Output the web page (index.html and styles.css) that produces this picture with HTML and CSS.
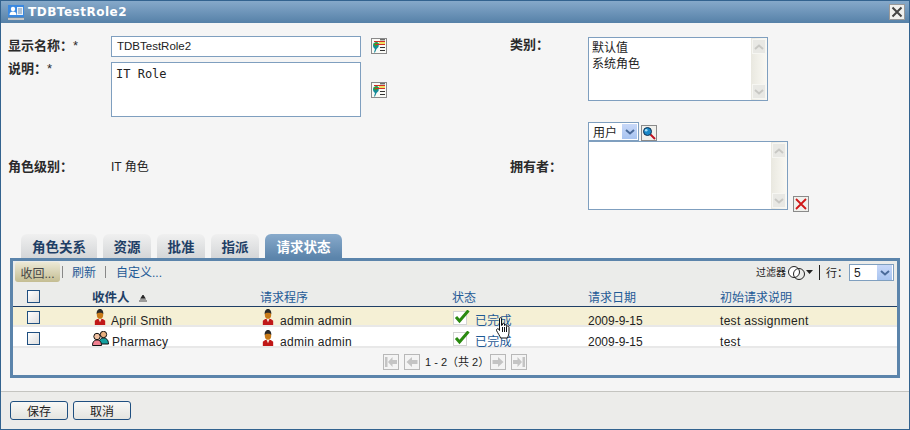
FILE: index.html
```html
<!DOCTYPE html>
<html lang="zh">
<head>
<meta charset="utf-8">
<title>TDBTestRole2</title>
<link rel="stylesheet" href="styles.css">
</head>
<body>
<svg class="defs" width="0" height="0">
  <symbol id="person" viewBox="0 0 12 17">
    <path d="M.5 17V12.500L3 10.500H9L11.500 12.500V17Z" fill="#c01818"/>
    <path d="M4.500 10.500H7.500L6 14Z" fill="#f4e8d8"/>
    <ellipse cx="6" cy="6" rx="3.400" ry="4.400" fill="#c87a18"/>
    <path d="M2.500 5.500C2.200 1.500 4 0 6 0S9.800 1.500 9.500 5.500C8.500 3.600 3.500 3.600 2.500 5.500Z" fill="#2a2a2a"/>
  </symbol>
  <symbol id="group" viewBox="0 0 17 15">
    <circle cx="11.500" cy="3.500" r="3.200" fill="#e8b080" stroke="#111"/>
    <path d="M7 13C7 8.500 9 7 11.500 7S16.500 8.500 16.500 13Z" fill="#14a0a0" stroke="#111"/>
    <circle cx="5" cy="5.500" r="3.200" fill="#f0c0a0" stroke="#111"/>
    <path d="M.5 14.500C.5 10.500 2.500 9 5 9S9.500 10.500 9.500 14.500Z" fill="#f08090" stroke="#111"/>
  </symbol>
  <symbol id="check" viewBox="0 0 17 15">
    <rect x=".5" y="1.500" width="13" height="13" fill="#fff" stroke="#d4d4d4"/>
    <path d="M3 7L6.500 11L15.500 .5" fill="none" stroke="#2a8a10" stroke-width="3"/>
  </symbol>
  <symbol id="lookup" viewBox="0 0 16 16">
    <rect x=".5" y=".5" width="15" height="15" fill="#fafaf6" stroke="#8a8a8a"/>
    <path d="M2 7.500C2 5.500 3.500 4 6 4L8 5.500L7.500 9L5.500 11L4 14.500H3L4 11C2.800 10 2 9 2 7.500Z" fill="#138a9a"/>
    <path d="M2.500 5.500L6 4L7.500 6L5.500 8.500L3.500 8Z" fill="#3aa030"/>
    <rect x="8" y="3" width="6" height="3" fill="#f0e060"/>
    <path d="M3 3.500H14M4 6.500H14" stroke="#d03028"/>
    <path d="M9 1.800H14M9 9.500H14M9 12.500H14" stroke="#333"/>
  </symbol>
  <symbol id="chev" viewBox="0 0 10 6">
    <path d="M1 1L5 4.500L9 1" fill="none" stroke="currentColor" stroke-width="2"/>
  </symbol>
  <symbol id="prev" viewBox="0 0 16 16">
    <rect x=".5" y=".5" width="15" height="15" fill="#f4f4f4" stroke="#b8b8b8"/>
    <path d="M2.500 8L8 3V6H13.500V10H8V13Z" fill="#c4c4c4"/>
  </symbol>
  <symbol id="first" viewBox="0 0 16 16">
    <rect x=".5" y=".5" width="15" height="15" fill="#f4f4f4" stroke="#b8b8b8"/>
    <path d="M2 3H4.500V13H2ZM5 8L9.500 3V6H14V10H9.500V13Z" fill="#c4c4c4"/>
  </symbol>
  <symbol id="next" viewBox="0 0 16 16">
    <rect x=".5" y=".5" width="15" height="15" fill="#f4f4f4" stroke="#b8b8b8"/>
    <path d="M13.500 8L8 3V6H2.500V10H8V13Z" fill="#c4c4c4"/>
  </symbol>
  <symbol id="last" viewBox="0 0 16 16">
    <rect x=".5" y=".5" width="15" height="15" fill="#f4f4f4" stroke="#b8b8b8"/>
    <path d="M14 3H11.500V13H14ZM11 8L6.500 3V6H2V10H6.500V13Z" fill="#c4c4c4"/>
  </symbol>
</svg>

<div class="window">
  <header class="titlebar">
    <svg class="title-icon" width="16" height="15" viewBox="0 0 16 15">
      <rect width="16" height="12" fill="#3a88e0"/>
      <rect x="9" y="2" width="6" height="8" fill="#eef4fa"/>
      <path d="M10 4H14M10 6H14M10 8H14" stroke="#7090b0"/>
      <circle cx="5" cy="4" r="2.200" fill="#fff"/>
      <path d="M1.500 10C1.500 7.500 3 6.500 5 6.500S8.500 7.500 8.500 10Z" fill="#fff"/>
      <rect y="13" width="16" height="2" fill="#c4c4c4"/>
    </svg>
    <span class="title-text">TDBTestRole2</span>
    <button class="close" type="button" aria-label="关闭">
      <svg width="12" height="12" viewBox="0 0 12 12"><path d="M1.500 1.500L10.500 10.500M10.500 1.500L1.500 10.500" stroke="#444" stroke-width="2"/></svg>
    </button>
  </header>

  <div class="form">
    <div class="form-left">
      <div class="f-row f-row-name">
        <label class="lbl lbl-left">显示名称：<span class="req">*</span></label>
        <div class="input">TDBTestRole2</div>
        <svg class="lookup" width="16" height="16"><use href="#lookup"/></svg>
      </div>
      <div class="f-row f-row-desc">
        <label class="lbl lbl-left">说明：<span class="req">*</span></label>
        <div class="textarea">IT Role</div>
        <svg class="lookup lookup-mid" width="16" height="16"><use href="#lookup"/></svg>
      </div>
      <div class="f-row f-row-level">
        <label class="lbl lbl-left">角色级别：</label>
        <span class="value">IT 角色</span>
      </div>
    </div>
    <div class="form-right">
      <div class="f-row f-row-cat">
        <label class="lbl lbl-right">类别：</label>
        <div class="listbox listbox-cat">
          <div class="list-items">默认值<br>系统角色</div>
          <div class="scroll">
            <span class="sbtn"><svg width="10" height="6"><use href="#chev" transform="rotate(180 5 3)"/></svg></span>
            <span class="sbtn"><svg width="10" height="6"><use href="#chev"/></svg></span>
          </div>
        </div>
      </div>
      <div class="f-row f-row-type">
        <div class="select select-type">用户<span class="sel-arrow"><svg width="10" height="6"><use href="#chev"/></svg></span></div>
        <button class="search" type="button" aria-label="搜索">
          <svg width="14" height="14" viewBox="0 0 14 14">
            <path d="M8.500 8.500L13 13" stroke="#c01020" stroke-width="2"/>
            <circle cx="5.500" cy="5.500" r="4" fill="#1888c8" stroke="#103050"/>
            <circle cx="4.200" cy="4.200" r="1.300" fill="#a8e0f8"/>
          </svg>
        </button>
      </div>
      <div class="f-row f-row-owner">
        <label class="lbl lbl-right lbl-owner">拥有者：</label>
        <div class="listbox listbox-owner">
          <div class="list-items"></div>
          <div class="scroll">
            <span class="sbtn"><svg width="10" height="6"><use href="#chev" transform="rotate(180 5 3)"/></svg></span>
            <span class="sbtn"><svg width="10" height="6"><use href="#chev"/></svg></span>
          </div>
        </div>
        <button class="remove" type="button" aria-label="删除">
          <svg width="14" height="14" viewBox="0 0 14 14"><path d="M2 2L12 12M12 2L2 12" stroke="#d01818" stroke-width="1.800"/></svg>
        </button>
      </div>
    </div>
  </div>

  <div class="content">
    <nav class="tabs">
      <a class="tab tab-a">角色关系</a>
      <a class="tab tab-b">资源</a>
      <a class="tab tab-c">批准</a>
      <a class="tab tab-c">指派</a>
      <a class="tab tab-d is-active">请求状态</a>
    </nav>
    <section class="panel">
      <div class="toolbar">
        <button class="tb-btn" type="button">收回...</button>
        <i class="tb-sep"></i>
        <a class="tb-link">刷新</a>
        <i class="tb-sep tb-sep2"></i>
        <a class="tb-link tb-link2">自定义...</a>
        <div class="tb-right">
          <span class="filter-lbl">过滤器</span>
          <svg class="filter-ic" width="25" height="16" viewBox="0 0 25 16">
            <circle cx="6" cy="7" r="5.500" fill="#fff" stroke="#222"/>
            <circle cx="11" cy="9" r="5.500" fill="none" stroke="#222"/>
            <path d="M18 5H25L21.500 9Z" fill="#222"/>
          </svg>
          <i class="tb-vline"></i>
          <span class="rows-lbl">行：</span>
          <div class="select select-rows">5<span class="sel-arrow"><svg width="10" height="6"><use href="#chev"/></svg></span></div>
        </div>
      </div>
      <table class="grid">
        <colgroup>
          <col class="c1"><col class="c2"><col class="c3"><col class="c4"><col class="c5"><col>
        </colgroup>
        <thead>
          <tr>
            <th><span class="cb cb-head"></span></th>
            <th class="th-sorted">收件人<svg class="sort" width="8" height="7" viewBox="0 0 8 7"><path d="M4 0L6 3H2ZM1 4H7M0 6H8" fill="#222" stroke="#222" stroke-width=".8"/></svg></th>
            <th>请求程序</th>
            <th>状态</th>
            <th>请求日期</th>
            <th>初始请求说明</th>
          </tr>
        </thead>
        <tbody>
          <tr class="row-hl">
            <td><span class="cb"></span></td>
            <td><span class="cell"><svg class="ic-person" width="12" height="16"><use href="#person"/></svg>April Smith</span></td>
            <td><span class="cell"><svg class="ic-req" width="12" height="16"><use href="#person"/></svg>admin admin</span></td>
            <td><span class="cell"><svg class="ic-check" width="17" height="15"><use href="#check"/></svg><a class="done">已完成</a></span></td>
            <td class="date">2009-9-15</td>
            <td>test assignment</td>
          </tr>
          <tr>
            <td><span class="cb"></span></td>
            <td><span class="cell"><svg class="ic-group" width="17" height="15"><use href="#group"/></svg>Pharmacy</span></td>
            <td><span class="cell"><svg class="ic-req" width="12" height="16"><use href="#person"/></svg>admin admin</span></td>
            <td><span class="cell"><svg class="ic-check" width="17" height="15"><use href="#check"/></svg><a class="done">已完成</a></span></td>
            <td class="date">2009-9-15</td>
            <td>test</td>
          </tr>
        </tbody>
      </table>
      <div class="pager">
        <svg width="16" height="16"><use href="#first"/></svg>
        <svg width="16" height="16"><use href="#prev"/></svg>
        <span class="pager-text">1 - 2（共 2）</span>
        <svg width="16" height="16"><use href="#next"/></svg>
        <svg width="16" height="16"><use href="#last"/></svg>
      </div>
      <svg class="hand" width="17" height="22" viewBox="0 0 16 22">
        <path d="M4 1.500C4 .5 6 .5 6 1.500V8.500L7 8V7C7 6 9 6 9 7V8.500C9.500 7.500 11 7.500 11 8.700V9.500C11.500 8.700 13.500 8.900 13.500 10.300V15C13.500 18 12.500 19 12 21H5C4.500 19 2.500 16.500 1 13.500C.5 12 2.500 11 3.500 12.500L4 13.500Z" fill="#fff" stroke="#111"/>
        <path d="M7 10V15M9 10V15M11 10V15" stroke="#111"/>
      </svg>
    </section>
  </div>

  <footer class="footer">
    <button class="btn" type="button">保存</button>
    <button class="btn" type="button">取消</button>
  </footer>
</div>
</body>
</html>
```

FILE: styles.css
```css
* { box-sizing: border-box; }
html, body { margin: 0; height: 100%; }
body {
  font-family: "Liberation Sans", "Noto Sans CJK SC", sans-serif;
  font-size: 12px;
  color: #222;
  overflow: hidden;
}
.defs { position: absolute; }
svg { display: block; flex: none; }
button { font: inherit; padding: 0; margin: 0; }

.window {
  width: 910px;
  height: 430px;
  display: flex;
  flex-direction: column;
  background: #f5f5f5;
  border: 1px solid #33638f;
}

/* title */
.titlebar {
  flex: none;
  height: 22px;
  display: flex;
  align-items: center;
  padding: 0 4px 0 7px;
  background: linear-gradient(#86a9ca, #5681a8);
}
.title-text {
  margin-left: 4px;
  color: #fff;
  font: bold 12px "DejaVu Sans", sans-serif;
  letter-spacing: .5px;
}
.close {
  margin-left: auto;
  width: 16px;
  height: 16px;
  display: flex;
  align-items: center;
  justify-content: center;
  background: #f0f0ee;
  border: 1px solid #999;
}

/* form */
.form {
  flex: none;
  height: 211px;
  display: flex;
}
.form-left { width: 509px; flex: none; padding-left: 7px; }
.form-right { flex: 1; }
.f-row { display: flex; align-items: flex-start; }
.lbl {
  font-size: 13px;
  font-weight: 700;
  line-height: 16px;
  color: #2a2a2a;
  flex: none;
  white-space: nowrap;
}
.lbl-left { width: 103px; }
.lbl-right { width: 78px; }
.req { font-weight: 400; margin-left: 0; }
.input, .textarea, .listbox {
  background: #fff;
  border: 1px solid #7f9fbf;
  flex: none;
}
.f-row-name { margin-top: 13px; }
.f-row-name .lbl { margin-top: 2px; }
.input {
  width: 250px;
  height: 21px;
  padding: 0 5px;
  line-height: 19px;
  font-size: 11.5px;
}
.lookup { margin: 2px 0 0 10px; }
.lookup-mid { margin-top: 20px; }
.f-row-desc { margin-top: 5px; }
.f-row-desc .lbl { margin-top: -1px; }
.textarea {
  width: 250px;
  height: 55px;
  padding: 3px 4px;
  font: 12px/16px "DejaVu Sans Mono", monospace;
}
.f-row-level { margin-top: 42px; }
.value { line-height: 16px; }

.f-row-cat { margin-top: 14px; }
.listbox { display: flex; }
.listbox-cat { width: 180px; height: 64px; }
.listbox-owner { width: 200px; height: 69px; }
.list-items {
  flex: 1;
  padding: 2px 3px;
  line-height: 16px;
  font-size: 12px;
}
.scroll {
  width: 16px;
  padding: 1px;
  display: flex;
  flex-direction: column;
  justify-content: space-between;
  background: linear-gradient(90deg, #e9e8e0, #faf9f4);
}
.sbtn {
  width: 14px;
  height: 15px;
  display: flex;
  align-items: center;
  justify-content: center;
  color: #c8c8c4;
  background: #e8e8e4;
  border: 1px solid #f6f6f2;
}
.f-row-type { margin-top: 21px; align-items: center; }
.select {
  background: #fff;
  border: 1px solid #7f9fbf;
  display: flex;
  align-items: center;
  justify-content: space-between;
  padding: 0 1px 0 4px;
}
.select-type { margin-left: 78px; width: 51px; height: 19px; font-size: 12px; }
.sel-arrow {
  width: 15px;
  height: 15px;
  display: flex;
  align-items: center;
  justify-content: center;
  color: #4a6a9a;
  background: linear-gradient(#c8d8f8, #a8c4f0);
}
.search, .remove {
  width: 16px;
  height: 16px;
  display: flex;
  align-items: center;
  justify-content: center;
  background: #f0f0ec;
  border: 1px solid #8a8a8a;
  flex: none;
}
.search { margin-left: 2px; margin-top: 3px; }
.lbl-owner { margin-top: 18px; }
.remove { margin: 55px 0 0 5px; }

/* tabs and panel */
.content { flex: none; padding: 0 9px; }
.tabs { display: flex; gap: 6px; padding-left: 11px; height: 24px; }
.tab {
  height: 24px;
  display: flex;
  align-items: center;
  justify-content: center;
  font-size: 13.5px;
  font-weight: 700;
  color: #1f3f66;
  background: linear-gradient(#f0f0f0, #d4d6d8);
  border-radius: 6px 6px 0 0;
}
.tab-a { width: 76px; }
.tab-b { width: 48px; }
.tab-c { width: 48px; }
.tab-d { width: 77px; }
.is-active { color: #fff; background: linear-gradient(#88aacb, #5b84ab); }

.panel {
  position: relative;
  width: 890px;
  height: 120px;
  background: #f5f5f5;
  border: 3px solid #5b84ab;
}
.toolbar {
  height: 25px;
  padding: 1px 3px 0 2px;
  display: flex;
  align-items: flex-start;
  background: #ebecea;
}
.tb-btn {
  width: 45px;
  height: 20px;
  color: #444;
  background: linear-gradient(#ece9d6, #c4bd92);
  border: 0;
  border-radius: 3px;
  font-size: 12px;
}
.tb-sep { width: 1px; height: 12px; margin: 4px 0 0 2px; background: #888; }
.tb-sep2 { margin-left: 9px; }
.tb-link, .done { color: #1f5a96; }
.tb-link { margin-left: 9px; line-height: 22px; }
.tb-link2 { margin-left: 10px; }
.tb-right { margin-left: auto; padding-top: 2px; display: flex; align-items: flex-start; }
.filter-lbl { font-size: 10px; line-height: 18px; width: 32px; }
.filter-ic { margin-top: 1px; }
.tb-vline { width: 1px; height: 15px; margin: 1px 6px 0 6px; background: #222; }
.rows-lbl { width: 23px; line-height: 18px; font-size: 11px; }
.select-rows { width: 45px; height: 17px; }

.grid { width: 884px; table-layout: fixed; border-collapse: separate; border-spacing: 0; }
.c1 { width: 79px; }
.c2 { width: 168px; }
.c3 { width: 192px; }
.c4 { width: 136px; }
.c5 { width: 132px; }
.grid th {
  height: 21px;
  padding: 0;
  text-align: left;
  font-weight: 400;
  color: #1f5a96;
  background: #ebecea;
  border-bottom: 1px solid #1f3f66;
}
.grid th.th-sorted { font-weight: 700; font-size: 12.5px; color: #1f3f66; }
.sort { display: inline-block; margin-left: 9px; vertical-align: 0; }
.grid td {
  height: 21px;
  padding: 0;
  background: #fff;
  border-bottom: 2px solid #e8e8e8;
  vertical-align: bottom;
  line-height: 8px;
  letter-spacing: .3px;
}
.grid .row-hl td { height: 20px; background: #f5f0d5; }
.grid .date { letter-spacing: 0; }
.cb {
  display: block;
  width: 13px;
  height: 13px;
  margin-left: 14px;
  margin-bottom: 1px;
  border: 1px solid #1f4f80;
  background: linear-gradient(135deg, #fff, #ddd);
}
.cb-head { margin-bottom: 0; }
.cell { display: flex; align-items: flex-end; }
.ic-person { margin: 0 5px 0 2px; }
.ic-group { margin-right: 3px; }
.ic-req { margin: 0 6px 0 2px; }
.ic-check { margin: 0 5px 0 1px; }

.pager {
  padding-top: 6px;
  display: flex;
  justify-content: center;
  gap: 5px;
}
.pager-text { width: 70px; margin: 0 -5px; padding-left: 5px; font-size: 11px; line-height: 16px; white-space: nowrap; }
.hand { position: absolute; left: 482px; top: 56px; }

/* footer */
.footer {
  margin-top: auto;
  flex: none;
  height: 38px;
  display: flex;
  gap: 5px;
  padding: 9px 0 0 9px;
  background: #ececea;
  border-top: 1px solid #c4c4c0;
}
.btn {
  width: 58px;
  height: 19px;
  background: linear-gradient(#f8f8f6, #e4e4e0);
  border: 1px solid #1f4f80;
  border-radius: 3px;
  font-size: 12px;
  color: #222;
}
```
